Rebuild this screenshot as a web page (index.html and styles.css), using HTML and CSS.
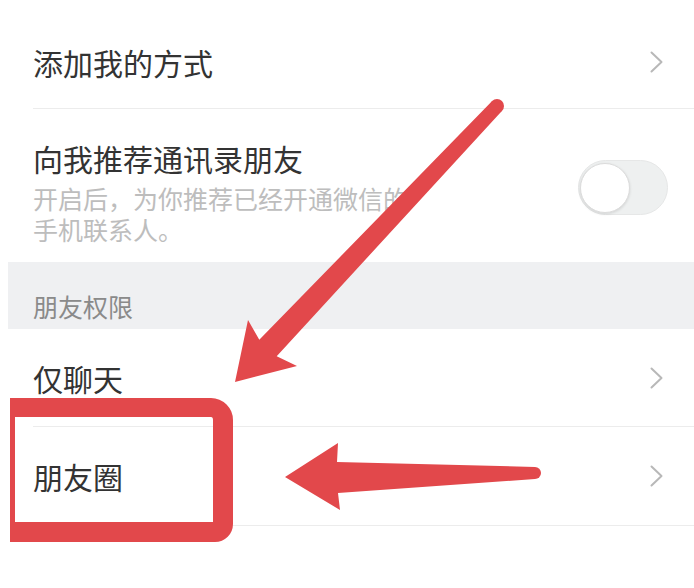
FILE: index.html
```html
<!DOCTYPE html>
<html lang="zh-CN">
<head>
<meta charset="utf-8">
<title>朋友权限</title>
<link rel="stylesheet" href="styles.css">
</head>
<body>
<div class="page">
  <div class="row row-first">
    <span class="title">添加我的方式</span>
    <svg class="chev" viewBox="0 0 13 22" width="13" height="22"><polyline points="1.5,1.5 11.5,11 1.5,20.5"/></svg>
  </div>
  <div class="divider"></div>
  <div class="row row-tall">
    <div class="text">
      <div class="title">向我推荐通讯录朋友</div>
      <div class="sub">开启后，为你推荐已经开通微信的手机联系人。</div>
    </div>
    <div class="toggle"><div class="knob"></div></div>
  </div>
  <div class="section">朋友权限</div>
  <div class="row row-item">
    <span class="title">仅聊天</span>
    <svg class="chev" viewBox="0 0 13 22" width="13" height="22"><polyline points="1.5,1.5 11.5,11 1.5,20.5"/></svg>
  </div>
  <div class="divider"></div>
  <div class="row row-item row-last">
    <span class="title">朋友圈</span>
    <svg class="chev" viewBox="0 0 13 22" width="13" height="22"><polyline points="1.5,1.5 11.5,11 1.5,20.5"/></svg>
  </div>
  <div class="divider"></div>
</div>
<div class="redbox"></div>
<svg class="arrows" viewBox="0 0 694 588" width="694" height="588">
  <polygon points="491.9,101.2 502.1,110.8 276.7,356.2 297,366 235,382 248,320 259.3,339.8"/>
  <circle cx="497" cy="106" r="7"/>
  <polygon points="285,477 338,443 337,462 535,467 535,479 338,493 340,510"/>
  <circle cx="535" cy="473" r="6"/>
</svg>
</body>
</html>
```

FILE: styles.css
```css
html, body {
  margin: 0;
  padding: 0;
  background: #ffffff;
}
body {
  position: relative;
  width: 694px;
  height: 588px;
  overflow: hidden;
  font-family: "Noto Sans CJK SC", "Noto Sans", sans-serif;
  color: #333333;
}
.page {
  margin-left: 8px;
}
.row {
  display: flex;
  align-items: center;
  justify-content: space-between;
  padding: 0 31px 0 25px;
  box-sizing: border-box;
}
.title {
  font-size: 30px;
  line-height: 36px;
  color: #333333;
}
.row-first {
  height: 108px;
  padding-top: 16px;
}
.row-tall {
  align-items: flex-start;
  padding-top: 31px;
  padding-bottom: 17px;
  padding-right: 26px;
}
.text {
  width: 380px;
}
.sub {
  margin-top: 7px;
  font-size: 25px;
  line-height: 31px;
  color: #bdbdbd;
}
.toggle {
  margin-top: 20px;
  width: 90px;
  height: 55px;
  border-radius: 28px;
  background: #eef0f0;
  box-sizing: border-box;
  border: 1px solid #e6e7e7;
  display: flex;
  align-items: center;
  padding-left: 1px;
}
.knob {
  width: 50px;
  height: 50px;
  border-radius: 50%;
  background: #ffffff;
  box-sizing: border-box;
  border: 1px solid #dcdcdc;
  box-shadow: 0 1px 3px rgba(0,0,0,0.12);
}
.section {
  height: 67px;
  box-sizing: border-box;
  padding: 31px 0 0 25px;
  background: #eff0f2;
  font-size: 25px;
  line-height: 26px;
  color: #8a8a8a;
}
.row-item {
  height: 97px;
}
.row-last {
  height: 98px;
}
.divider {
  height: 1px;
  margin-left: 25px;
  background: #ececec;
}
.chev {
  display: block;
  flex: none;
}
.chev polyline {
  fill: none;
  stroke: #b8b8b8;
  stroke-width: 2;
  stroke-linecap: round;
  stroke-linejoin: round;
}
.redbox {
  position: absolute;
  left: 10px;
  top: 398px;
  width: 223px;
  height: 144px;
  box-sizing: border-box;
  border-style: solid;
  border-color: #e2484b;
  border-width: 19px 20px 20px 5px;
  border-radius: 0 22px 18px 0;
}
.arrows {
  position: absolute;
  left: 0;
  top: 0;
}
.arrows polygon, .arrows circle {
  fill: #e2484b;
}
```
